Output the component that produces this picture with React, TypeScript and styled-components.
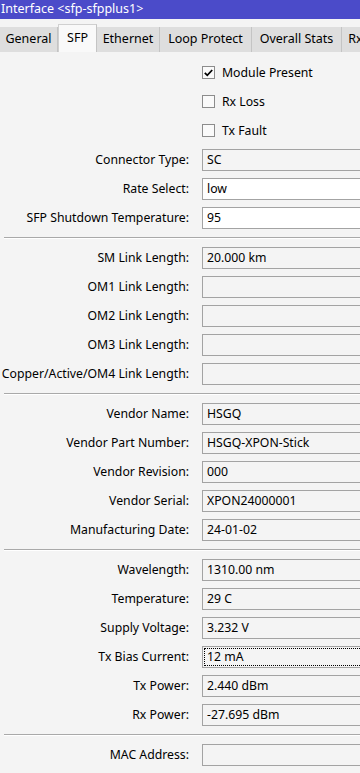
import React from 'react';
import styled, { createGlobalStyle, css } from 'styled-components';

const GlobalStyle = createGlobalStyle`
    html, body {
        margin: 0;
        padding: 0;
        background: #f4f4f4;
    }
    body {
        font-family: "Noto Sans", "Liberation Sans", sans-serif;
        font-size: 12.25px;
        color: #000;
    }
`

const Window = styled.div`
    width: 360px;
    height: 773px;
    overflow: hidden;
    background: #f4f4f4;
    display: flex;
    flex-direction: column;
`

const TitleBar = styled.div`
    height: 19px;
    flex: none;
    background: #4b4bc9;
    color: #fff;
    font-size: 12.5px;
    line-height: 18px;
    padding-left: 1px;
    white-space: nowrap;
`

const TabStrip = styled.div`
    height: 33px;
    flex: none;
    display: flex;
    align-items: flex-end;
    white-space: nowrap;
    overflow: hidden;
    font-size: 12.5px;
`

const Tab = styled.div<{active?: boolean; w: number}>(({active, w}) => css`
    flex: none;
    width: ${w}px;
    height: ${active ? 28 : 25}px;
    line-height: ${active ? 26 : 24}px;
    text-align: center;
    background: ${active ? '#f9f9f9' : '#dedede'};
    border-right: 1px solid #c4c4c4;
    border-top: ${active ? '1px solid #d0d0d0' : 'none'};
    border-left: ${active ? '1px solid #d0d0d0' : 'none'};
    box-sizing: border-box;
    overflow: hidden;
`)

const Form = styled.div`
    padding-top: 6px;
    display: flex;
    flex-direction: column;
`

const Row = styled.div`
    height: 29px;
    display: grid;
    grid-template-columns: 189px 200px;
    column-gap: 13px;
    align-items: center;
    white-space: nowrap;
`

const Label = styled.div`
    text-align: right;
`

const Field = styled.div<{editable?: boolean; focused?: boolean}>(({editable, focused}) => css`
    height: 22px;
    box-sizing: border-box;
    border: 1px solid #a3a3a3;
    background: ${editable ? '#ffffff' : '#f4f4f4'};
    padding: 1px;
    width: 200px;
    & > span {
        display: block;
        height: 18px;
        padding-left: 2px;
        box-sizing: border-box;
        border: 1px dotted ${focused ? '#000' : 'transparent'};
        line-height: 16px;
    }
`)

const CheckRow = styled.div`
    grid-column: 2;
    display: flex;
    align-items: center;
    gap: 7px;
`

const CheckBox = styled.div`
    width: 13px;
    height: 13px;
    box-sizing: border-box;
    border: 1px solid #8c8c8c;
    background: #fafafa;
    display: flex;
    align-items: center;
    justify-content: center;
`

const Separator = styled.div`
    margin: 5px 0 4px 4px;
    border-top: 1px solid #a9a9a9;
    border-bottom: 1px solid #ffffff;
`

const tabs: [string, number][] = [
    ['General', 58],
    ['SFP', 39],
    ['Ethernet', 63],
    ['Loop Protect', 92],
    ['Overall Stats', 90],
    ['Rx Stats', 60],
]

const checks: [string, boolean][] = [
    ['Module Present', true],
    ['Rx Loss', false],
    ['Tx Fault', false],
]

type FieldDef = {label: string; value: string; editable?: boolean; focused?: boolean}

const sections: FieldDef[][] = [
    [
        {label: 'Connector Type:', value: 'SC'},
        {label: 'Rate Select:', value: 'low', editable: true},
        {label: 'SFP Shutdown Temperature:', value: '95', editable: true},
    ],
    [
        {label: 'SM Link Length:', value: '20.000 km'},
        {label: 'OM1 Link Length:', value: ''},
        {label: 'OM2 Link Length:', value: ''},
        {label: 'OM3 Link Length:', value: ''},
        {label: 'Copper/Active/OM4 Link Length:', value: ''},
    ],
    [
        {label: 'Vendor Name:', value: 'HSGQ'},
        {label: 'Vendor Part Number:', value: 'HSGQ-XPON-Stick'},
        {label: 'Vendor Revision:', value: '000'},
        {label: 'Vendor Serial:', value: 'XPON24000001'},
        {label: 'Manufacturing Date:', value: '24-01-02'},
    ],
    [
        {label: 'Wavelength:', value: '1310.00 nm'},
        {label: 'Temperature:', value: '29 C'},
        {label: 'Supply Voltage:', value: '3.232 V'},
        {label: 'Tx Bias Current:', value: '12 mA', focused: true},
        {label: 'Tx Power:', value: '2.440 dBm'},
        {label: 'Rx Power:', value: '-27.695 dBm'},
    ],
    [
        {label: 'MAC Address:', value: ''},
    ],
]

const App = () => {
    return (
        <Window>
            <GlobalStyle />
            <TitleBar>Interface &lt;sfp-sfpplus1&gt;</TitleBar>
            <TabStrip>
                {tabs.map(([t, w]) => (
                    <Tab key={t} w={w} active={t === 'SFP'}>{t}</Tab>
                ))}
            </TabStrip>
            <Form>
                {checks.map(([label, checked]) => (
                    <Row key={label}>
                        <CheckRow>
                            <CheckBox>
                                {checked && (
                                    <svg width="9" height="8" viewBox="0 0 9 8">
                                        <path d="M0.8 3.8 L3.3 6.3 L8.2 1" stroke="#000" strokeWidth="1.8" fill="none" />
                                    </svg>
                                )}
                            </CheckBox>
                            {label}
                        </CheckRow>
                    </Row>
                ))}
                {sections.map((section, i) => (
                    <React.Fragment key={i}>
                        {i > 0 && <Separator />}
                        {section.map(f => (
                            <Row key={f.label}>
                                <Label>{f.label}</Label>
                                <Field editable={f.editable} focused={f.focused}>
                                    <span>{f.value}</span>
                                </Field>
                            </Row>
                        ))}
                    </React.Fragment>
                ))}
            </Form>
        </Window>
    )
}

export default App;
